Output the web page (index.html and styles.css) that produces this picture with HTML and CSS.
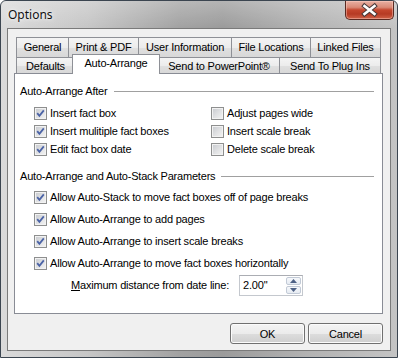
FILE: index.html
```html
<!DOCTYPE html>
<html>
<head>
<meta charset="utf-8">
<title>Options</title>
<link rel="stylesheet" href="styles.css">
</head>
<body>
<div class="window">
  <div class="titlebar">
    <span class="title">Options</span>
    <div class="close">
      <svg width="47" height="18" viewBox="0 0 47 18">
        <path d="M18.5 5 L28.5 13 M28.5 5 L18.5 13" stroke="#4a3a3a" stroke-width="4.6" stroke-linecap="square" fill="none"/>
        <path d="M18.5 5 L28.5 13 M28.5 5 L18.5 13" stroke="#ffffff" stroke-width="2.6" stroke-linecap="square" fill="none"/>
      </svg>
    </div>
  </div>
  <div class="client">
    <div class="tabrow row1">
      <div class="tab">General</div>
      <div class="tab">Print &amp; PDF</div>
      <div class="tab">User Information</div>
      <div class="tab">File Locations</div>
      <div class="tab last">Linked Files</div>
    </div>
    <div class="tabrow row2">
      <div class="tab">Defaults</div>
      <div class="tab selected">Auto-Arrange</div>
      <div class="tab">Send to PowerPoint®</div>
      <div class="tab last">Send To Plug Ins</div>
    </div>
    <div class="panel">
      <div class="group-title">Auto-Arrange After</div>
      <div class="grid2">
        <div class="check"><span class="cb"><svg width="11" height="11" viewBox="0 0 11 11"><path d="M2.2 5.2 L4.4 7.8 L8.8 2.4" stroke="#4b63a6" stroke-width="1.8" fill="none"/></svg></span>Insert fact box</div>
        <div class="check"><span class="cb"></span>Adjust pages wide</div>
        <div class="check"><span class="cb"><svg width="11" height="11" viewBox="0 0 11 11"><path d="M2.2 5.2 L4.4 7.8 L8.8 2.4" stroke="#4b63a6" stroke-width="1.8" fill="none"/></svg></span>Insert mulitiple fact boxes</div>
        <div class="check"><span class="cb"></span>Insert scale break</div>
        <div class="check"><span class="cb"><svg width="11" height="11" viewBox="0 0 11 11"><path d="M2.2 5.2 L4.4 7.8 L8.8 2.4" stroke="#4b63a6" stroke-width="1.8" fill="none"/></svg></span>Edit fact box date</div>
        <div class="check"><span class="cb"></span>Delete scale break</div>
      </div>
      <div class="group-title second">Auto-Arrange and Auto-Stack Parameters</div>
      <div class="list">
        <div class="check"><span class="cb"><svg width="11" height="11" viewBox="0 0 11 11"><path d="M2.2 5.2 L4.4 7.8 L8.8 2.4" stroke="#4b63a6" stroke-width="1.8" fill="none"/></svg></span>Allow Auto-Stack to move fact boxes off of page breaks</div>
        <div class="check"><span class="cb"><svg width="11" height="11" viewBox="0 0 11 11"><path d="M2.2 5.2 L4.4 7.8 L8.8 2.4" stroke="#4b63a6" stroke-width="1.8" fill="none"/></svg></span>Allow Auto-Arrange to add pages</div>
        <div class="check"><span class="cb"><svg width="11" height="11" viewBox="0 0 11 11"><path d="M2.2 5.2 L4.4 7.8 L8.8 2.4" stroke="#4b63a6" stroke-width="1.8" fill="none"/></svg></span>Allow Auto-Arrange to insert scale breaks</div>
        <div class="check"><span class="cb"><svg width="11" height="11" viewBox="0 0 11 11"><path d="M2.2 5.2 L4.4 7.8 L8.8 2.4" stroke="#4b63a6" stroke-width="1.8" fill="none"/></svg></span>Allow Auto-Arrange to move fact boxes horizontally</div>
        <div class="maxrow">
          <span><u>M</u>aximum distance from date line:</span>
          <div class="spin">
            <span class="spin-value">2.00"</span>
            <div class="spin-btns">
              <div class="spin-btn"><svg width="7" height="4" viewBox="0 0 7 4"><path d="M0 4 L3.5 0 L7 4 Z" fill="#4d6185"/></svg></div>
              <div class="spin-btn"><svg width="7" height="4" viewBox="0 0 7 4"><path d="M0 0 L3.5 4 L7 0 Z" fill="#4d6185"/></svg></div>
            </div>
          </div>
        </div>
      </div>
    </div>
    <div class="buttons">
      <button class="btn">OK</button>
      <button class="btn">Cancel</button>
    </div>
  </div>
</div>
</body>
</html>
```
FILE: styles.css
```css
* { box-sizing: border-box; }
html, body { margin: 0; padding: 0; }
body {
  width: 398px;
  height: 358px;
  overflow: hidden;
  background: #ffffff;
  font-family: "Liberation Sans", Arial, sans-serif;
  font-size: 11px;
  line-height: 13px;
  letter-spacing: -0.2px;
  color: #000;
}
.window {
  width: 398px;
  height: 358px;
  border: 1px solid #3b4550;
  border-radius: 6px 6px 0 0;
  background: linear-gradient(90deg, #dadada 0%, #c6c6c6 22%, #a2a2a2 45%, #9b9b9b 56%, #b3b3b3 78%, #c4c4c4 100%);
  display: flex;
  flex-direction: column;
  padding: 0 6px 6px 6px;
  overflow: hidden;
}
.titlebar {
  margin: 0 -6px;
  height: 27px;
  display: flex;
  align-items: flex-start;
  padding: 0 3px 0 7px;
  background: linear-gradient(180deg, rgba(255,255,255,0.25), rgba(255,255,255,0));
}
.title {
  margin-top: 6px;
  font-family: "Noto Sans", "Open Sans", sans-serif;
  font-size: 12px;
  line-height: 16px;
  letter-spacing: 0;
  color: #111;
  text-shadow: 0 0 6px rgba(255,255,255,0.9), 0 0 3px rgba(255,255,255,0.8);
}
.close {
  margin-left: auto;
  width: 49px;
  height: 19px;
  border: 1px solid #5a2a22;
  border-top: none;
  border-radius: 0 0 5px 5px;
  background: linear-gradient(180deg, #e8b0a3 0%, #d98a77 35%, #c4462e 50%, #b63a24 72%, #d06248 100%);
  box-shadow: inset 0 0 0 1px rgba(255,210,200,0.45);
  display: flex;
  align-items: center;
  justify-content: center;
}
.client {
  flex: 1;
  border: 1px solid #7a7a7a;
  background: #f0f0f0;
  padding: 8px 7px 6px 6px;
  display: flex;
  flex-direction: column;
}
.tabrow {
  display: grid;
  margin: 0 2px;
}
.row1 {
  grid-template-columns: 52px 70px 93px 79px 71px;
  height: 20px;
}
.row2 {
  grid-template-columns: 58px 84px 121px 102px;
  height: 16px;
}
.tab {
  border-top: 1px solid #8e9096;
  border-left: 1px solid #8e9096;
  background: linear-gradient(180deg, #f4f4f4 0%, #ececec 50%, #e0e0e0 51%, #d8d8d8 100%);
  text-align: center;
  white-space: nowrap;
}
.tab.last { border-right: 1px solid #8e9096; }
.row1 .tab { padding-top: 3px; }
.row2 .tab { padding-top: 2px; }
.tab.selected {
  margin: -3px -2px -1px -2px;
  border: 1px solid #8e9096;
  border-bottom: none;
  background: #ffffff;
  padding-top: 2px;
  position: relative;
  z-index: 2;
}
.panel {
  height: 241px;
  border: 1px solid #898c95;
  background: #ffffff;
  padding: 11px 8px 0 5px;
}
.group-title {
  display: flex;
  align-items: center;
  gap: 6px;
  white-space: nowrap;
}
.group-title::after {
  content: "";
  flex: 1;
  height: 1px;
  background: #a0a0a0;
}
.group-title.second { margin-top: 12px; }
.grid2 {
  display: grid;
  grid-template-columns: 177px 1fr;
  grid-auto-rows: 18px;
  margin-top: 6px;
  padding-left: 14px;
}
.list {
  display: grid;
  grid-auto-rows: 22px;
  margin-top: 3px;
  padding-left: 14px;
}
.check {
  display: flex;
  align-items: center;
  gap: 3px;
  white-space: nowrap;
}
.cb {
  width: 13px;
  height: 13px;
  flex: none;
  border: 1px solid #8e8f8f;
  background: linear-gradient(135deg, #c6c9ce 0%, #dfe0e2 50%, #f4f4f4 100%);
  box-shadow: inset 0 0 0 1px #f2f2f2;
  display: flex;
  align-items: center;
  justify-content: center;
}
.maxrow {
  display: flex;
  align-items: center;
  gap: 10px;
  padding-left: 37px;
  white-space: nowrap;
}
.spin {
  width: 64px;
  height: 21px;
  border: 1px solid #c4c8ce;
  border-top-color: #abadb3;
  background: #ffffff;
  display: flex;
  align-items: center;
  padding-left: 3px;
}
.spin-btns {
  margin-left: auto;
  margin-right: 1px;
  width: 15px;
  height: 17px;
  display: flex;
  flex-direction: column;
  gap: 1px;
}
.spin-btn {
  flex: 1;
  border: 1px solid #c2cad6;
  border-radius: 2px;
  background: linear-gradient(180deg, #f6f8fb 0%, #e6ebf2 100%);
  display: flex;
  align-items: center;
  justify-content: center;
}
.buttons {
  display: flex;
  justify-content: flex-end;
  gap: 3px;
  margin-top: 9px;
}
.btn {
  width: 75px;
  height: 21px;
  padding: 0;
  font-family: "Liberation Sans", Arial, sans-serif;
  font-size: 11px;
  letter-spacing: -0.2px;
  color: #000;
  border: 1px solid #707070;
  border-radius: 3px;
  background: linear-gradient(180deg, #f4f4f4 0%, #ebebeb 50%, #dddddd 51%, #cfcfcf 100%);
  box-shadow: inset 0 0 0 1px #fbfbfb;
}
```
